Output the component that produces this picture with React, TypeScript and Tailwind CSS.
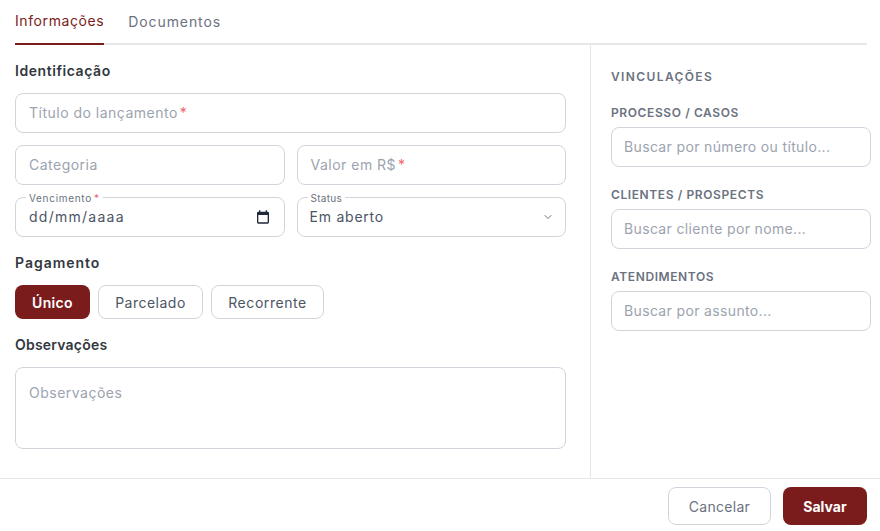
import React from 'react';
import { ChevronDown } from 'lucide-react';

const fieldBox = 'h-10 w-full rounded-lg border border-[#d1d5db] bg-white px-[13px] text-[14px] tracking-[0.035em] text-[#4b5563] outline-none placeholder:text-[#9ca3af]';

const Required = () => <span className="ml-[2px] text-[#f0646c]">*</span>;

// placeholder with the red asterisk, drawn over an empty input
const RequiredInput = ({ label }: { label: string }) => (
  <div className="relative flex-1">
    <input className={fieldBox} />
    <span className="pointer-events-none absolute left-[14px] top-[10px] text-[14px] leading-5 tracking-[0.035em] text-[#9ca3af]">
      {label}
      <Required />
    </span>
  </div>
);

const FloatingLabel = ({ children, className = '' }: { children: React.ReactNode; className?: string }) => (
  <span className={`absolute -top-[6px] left-[10px] bg-white px-[3px] text-[10px] leading-[12px] text-[#6b7280] ${className}`}>
    {children}
  </span>
);

const SectionTitle = ({ children, className = '' }: { children: React.ReactNode; className?: string }) => (
  <h3 className={`text-[14px] font-semibold leading-5 text-[#333840] ${className}`}>{children}</h3>
);

const LinkField = ({ label, placeholder }: { label: string; placeholder: string }) => (
  <div className="flex w-[260px] flex-col gap-[6px]">
    <label className="text-[12px] font-semibold leading-4 tracking-[0.05em] text-[#6b7280]">{label}</label>
    <input
      className="h-10 w-full rounded-lg border border-[#d1d5db] bg-white px-3 pb-[2px] text-[14px] tracking-[0.025em] outline-none placeholder:text-[#9ca3af]"
      placeholder={placeholder}
    />
  </div>
);

const App: React.FC = () => {
  return (
    <div className="flex h-[531px] w-[880px] flex-col overflow-hidden bg-white font-['Inter',sans-serif]">
      {/* Tabs */}
      <div className="mx-[15px] mr-[13px] flex h-[45px] gap-6 border-b-2 border-[#e5e7eb]">
        <button className="-mb-[2px] h-[45px] border-b-2 border-[#7b1c1c] pb-[3px] text-[14px] tracking-[0.042em] text-[#7b1c1c]">
          Informações
        </button>
        <button className="h-[43px] pb-[1px] text-[14px] tracking-[0.065em] text-[#6b7280]">Documentos</button>
      </div>

      <div className="flex h-[433px]">
        {/* Main column */}
        <div className="flex w-[591px] flex-col border-r border-[#e5e7eb] pl-[15px] pr-6 pt-4">
          <SectionTitle className="tracking-[0.04em]">Identificação</SectionTitle>
          <div className="mt-3 flex">
            <RequiredInput label="Título do lançamento" />
          </div>
          <div className="mt-3 grid grid-cols-2 gap-3">
            <input className={`${fieldBox} pb-[2px]`} placeholder="Categoria" />
            <RequiredInput label="Valor em R$" />
          </div>
          <div className="mt-3 grid grid-cols-2 gap-3">
            <div className={`${fieldBox} relative flex items-center justify-between`}>
              <FloatingLabel className="tracking-[0.07em]">
                Vencimento
                <Required />
              </FloatingLabel>
              <span className="mb-[2px] tracking-[0.09em]">dd/mm/aaaa</span>
              <svg viewBox="0 0 24 24" className="h-[16px] w-[16px] fill-[#1f2937]">
                <path d="M19 4h-1V2h-2v2H8V2H6v2H5a2 2 0 0 0-2 2v14a2 2 0 0 0 2 2h14a2 2 0 0 0 2-2V6a2 2 0 0 0-2-2zm0 16H5V9h14v11z" />
              </svg>
            </div>
            <div className={`${fieldBox} relative flex items-center justify-between !px-3`}>
              <FloatingLabel className="tracking-[0.03em]">Status</FloatingLabel>
              <span className="mb-[2px] tracking-[0.055em]">Em aberto</span>
              <ChevronDown className="-mr-[1px] h-3 w-3 text-[#6b7280]" />
            </div>
          </div>

          <div className="mt-4">
            <SectionTitle className="tracking-[0.07em]">Pagamento</SectionTitle>
          </div>
          <div className="mt-3 flex gap-2">
            <button className="h-[34px] w-[75px] rounded-lg bg-[#7b1c1c] text-[14px] font-semibold tracking-[0.025em] text-white">
              Único
            </button>
            <button className="h-[34px] w-[105px] rounded-lg border border-[#d1d5db] text-[14px] tracking-[0.035em] text-[#4b5563]">
              Parcelado
            </button>
            <button className="h-[34px] w-[113px] rounded-lg border border-[#d1d5db] text-[14px] tracking-[0.04em] text-[#4b5563]">
              Recorrente
            </button>
          </div>

          <div className="mt-4">
            <SectionTitle className="tracking-[0.015em]">Observações</SectionTitle>
          </div>
          <textarea
            className="mt-3 h-[82px] w-full resize-none rounded-lg border border-[#d1d5db] px-[13px] py-[15px] text-[14px] leading-5 tracking-[0.035em] outline-none placeholder:text-[#9ca3af]"
            placeholder="Observações"
          />
        </div>

        {/* Links column */}
        <div className="flex flex-col pl-5 pt-6">
          <h4 className="text-[12px] font-semibold leading-4 tracking-[0.115em] text-[#6b7280]">VINCULAÇÕES</h4>
          <div className="mt-5 flex flex-col gap-5">
            <LinkField label="PROCESSO / CASOS" placeholder="Buscar por número ou título..." />
            <LinkField label="CLIENTES / PROSPECTS" placeholder="Buscar cliente por nome..." />
            <LinkField label="ATENDIMENTOS" placeholder="Buscar por assunto..." />
          </div>
        </div>
      </div>

      {/* Footer */}
      <div className="flex h-[53px] items-start justify-end gap-3 border-t border-[#e5e7eb] pr-[13px] pt-2">
        <button className="h-[38px] w-[103px] rounded-lg border border-[#d1d5db] text-[14px] tracking-[0.02em] text-[#6b7280]">
          Cancelar
        </button>
        <button className="h-[38px] w-[84px] rounded-lg bg-[#7b1c1c] text-[14px] font-bold text-white">Salvar</button>
      </div>
    </div>
  );
};

export default App;
